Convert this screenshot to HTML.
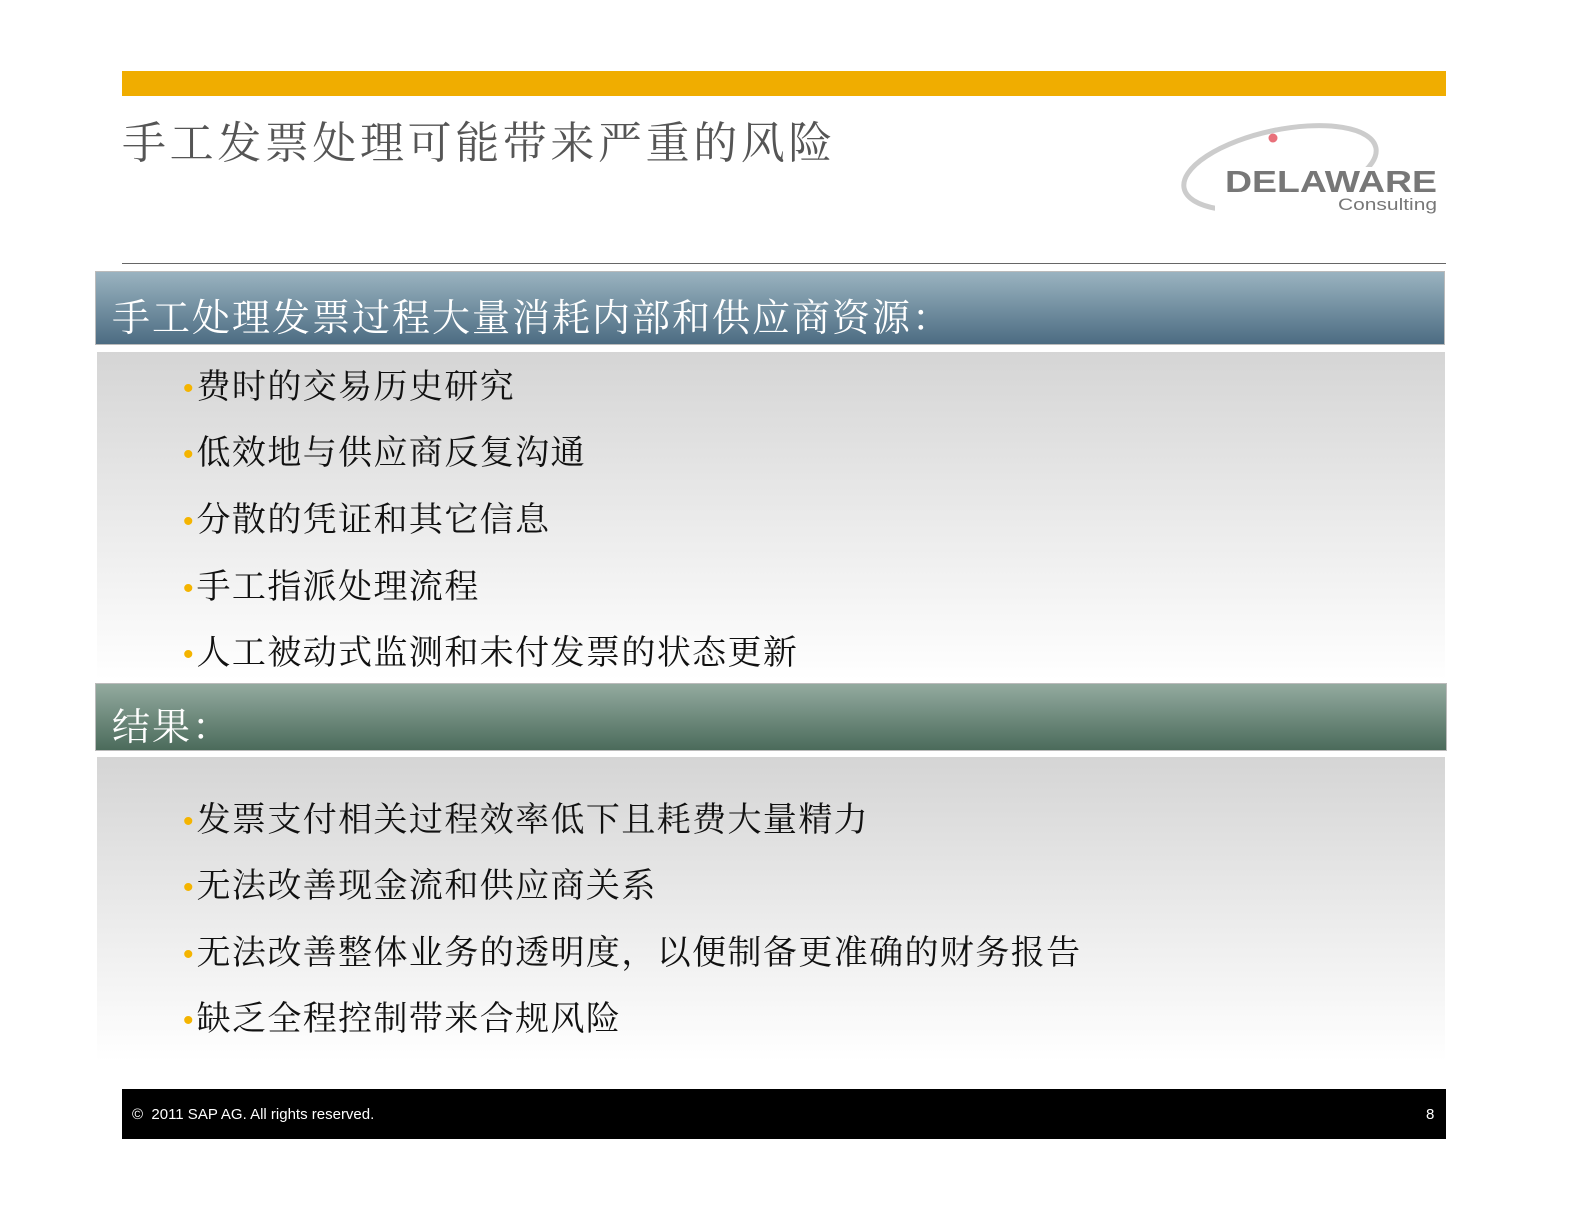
<!DOCTYPE html>
<html><head><meta charset="utf-8"><style>
body{margin:0;width:1587px;height:1226px;background:#fff;position:relative;overflow:hidden;font-family:"Liberation Serif","Noto Serif CJK SC",serif}
.a{position:absolute}
.b{position:absolute;left:183px;font-size:34px;color:#111;white-space:nowrap;line-height:40px;letter-spacing:1.4px}
.b:before{content:"•";color:#f4b400;font-family:"Liberation Sans",sans-serif;font-size:30px;margin-right:3px;letter-spacing:0}
</style></head><body>
<div class="a" style="left:122px;top:71px;width:1324px;height:25px;background:#f0ad00"></div>
<div class="a" style="left:122px;top:107px;font-size:44px;color:#555;white-space:nowrap;letter-spacing:3.6px">手工发票处理可能带来严重的风险</div>
<svg class="a" style="left:1175px;top:115px" width="280" height="110">
<ellipse cx="105" cy="53" rx="98" ry="38" transform="rotate(-12 105 53)" fill="none" stroke="#ccc" stroke-width="5"/>
<rect x="40" y="52" width="230" height="48" fill="#fff"/>
<circle cx="98" cy="23" r="4.5" fill="#e8707a"/>
<text x="50" y="77" textLength="212" lengthAdjust="spacingAndGlyphs" font-family="Liberation Sans,sans-serif" font-weight="bold" font-size="31" fill="#777">DELAWARE</text>
<text x="163" y="95" textLength="99" lengthAdjust="spacingAndGlyphs" font-family="Liberation Sans,sans-serif" font-size="17" fill="#777">Consulting</text>
</svg>
<div class="a" style="left:122px;top:263px;width:1324px;height:1px;background:#666"></div>
<div class="a" style="left:95px;top:271px;width:1348px;height:72px;border:1px solid #bbb;background:linear-gradient(#9ab3c0,#4c6c82)"></div>
<div class="a" style="left:112px;top:287px;font-size:38px;color:#fff;white-space:nowrap;letter-spacing:2px">手工处理发票过程大量消耗内部和供应商资源：</div>
<div class="a" style="left:97px;top:352px;width:1348px;height:328px;background:linear-gradient(#d5d5d5,#fff)"></div>
<div class="b" style="top:368px">费时的交易历史研究</div>
<div class="b" style="top:434px">低效地与供应商反复沟通</div>
<div class="b" style="top:501px">分散的凭证和其它信息</div>
<div class="b" style="top:568px">手工指派处理流程</div>
<div class="b" style="top:634px">人工被动式监测和未付发票的状态更新</div>
<div class="a" style="left:95px;top:683px;width:1350px;height:66px;border:1px solid #bbb;background:linear-gradient(#93aa9f,#4b6b5b)"></div>
<div class="a" style="left:112px;top:696px;font-size:38px;color:#fff;white-space:nowrap;letter-spacing:2px">结果：</div>
<div class="a" style="left:97px;top:757px;width:1348px;height:305px;background:linear-gradient(#d5d5d5,#fff)"></div>
<div class="b" style="top:801px">发票支付相关过程效率低下且耗费大量精力</div>
<div class="b" style="top:867px">无法改善现金流和供应商关系</div>
<div class="b" style="top:934px">无法改善整体业务的透明度，以便制备更准确的财务报告</div>
<div class="b" style="top:1000px">缺乏全程控制带来合规风险</div>
<div class="a" style="left:122px;top:1089px;width:1324px;height:50px;background:#000"></div>
<div class="a" style="left:132px;top:1106px;font-family:'Liberation Sans',sans-serif;font-size:15px;color:#fff">©&nbsp; 2011 SAP AG. All rights reserved.</div>
<div class="a" style="left:1426px;top:1106px;font-family:'Liberation Sans',sans-serif;font-size:15px;color:#fff">8</div>
</body></html>
